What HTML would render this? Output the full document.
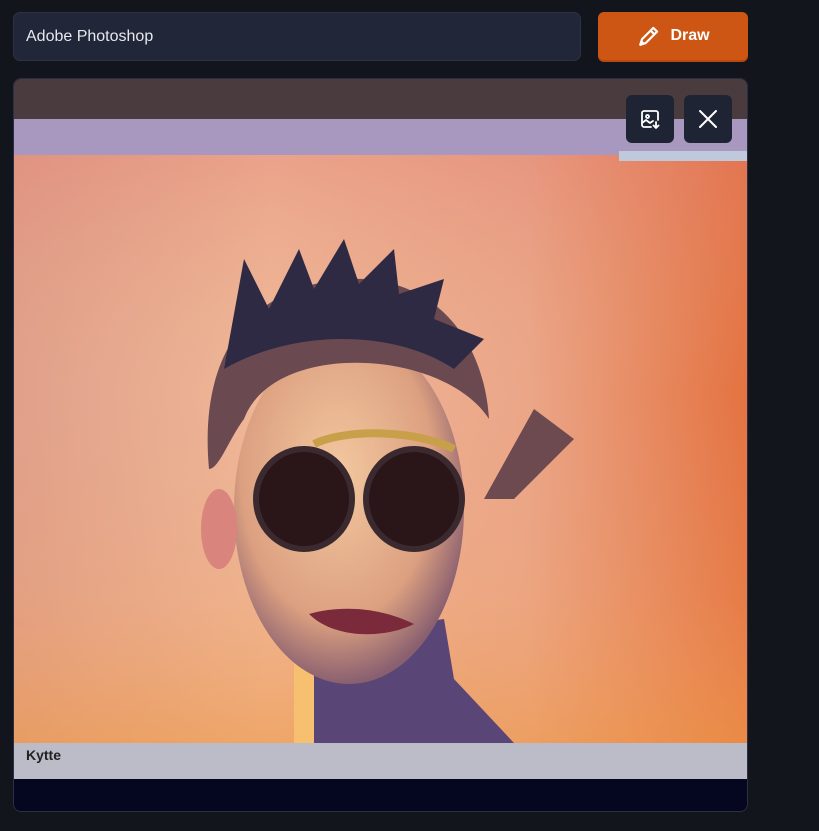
<!DOCTYPE html>
<html><head><meta charset="utf-8"><style>
body{margin:0;width:819px;height:831px;background:#13151d;font-family:"Liberation Sans",sans-serif;position:relative;overflow:hidden}
.inp{position:absolute;left:13px;top:12px;width:568px;height:49px;background:#222639;border:1px solid #2c3146;border-radius:7px;box-sizing:border-box;color:#e6e8ee;font-size:16px;line-height:48px;padding-left:12px}
.btn{position:absolute;left:598px;top:12px;width:150px;height:48px;background:#cd5614;border-radius:6px;color:#fff;font-weight:bold;font-size:16px;display:flex;align-items:center;justify-content:center;gap:8px;box-shadow:0 2px 0 #b84a10}
.card{position:absolute;left:13px;top:78px;width:735px;height:734px;border-radius:8px;overflow:hidden;border:1px solid #2a2f44;box-sizing:border-box}
.ib{position:absolute;top:95px;width:48px;height:48px;background:#1f2435;border-radius:6px;display:flex;align-items:center;justify-content:center}
</style></head><body>
<div class="inp">Adobe Photoshop</div>
<div class="btn"><svg width="26" height="26" viewBox="0 0 24 24" fill="none" stroke="#fff" stroke-width="2" stroke-linejoin="round"><path d="M4 20l1.5-5L16 4.5l3.5 3.5L9 18.5z"/><path d="M13.5 7l3.5 3.5"/><path d="M4 20l3-1-2-2z" fill="#fff"/></svg>Draw</div>
<div class="card">
<svg width="735" height="734" viewBox="0 0 735 734">
<defs>
<linearGradient id="bg" x1="0" y1="0" x2="1" y2="0"><stop offset="0" stop-color="#e0a08a"/><stop offset="0.35" stop-color="#f0b898"/><stop offset="0.7" stop-color="#eba688"/><stop offset="1" stop-color="#e47240"/></linearGradient>
<linearGradient id="bg2" x1="0" y1="0" x2="0" y2="1"><stop offset="0" stop-color="#e07a70" stop-opacity="0.35"/><stop offset="0.4" stop-color="#e0a080" stop-opacity="0"/><stop offset="0.75" stop-color="#f0a060" stop-opacity="0.2"/><stop offset="1" stop-color="#ee9a48" stop-opacity="0.6"/></linearGradient>
<radialGradient id="face" cx="0.45" cy="0.4" r="0.6"><stop offset="0" stop-color="#f3c8a0"/><stop offset="0.7" stop-color="#dca080"/><stop offset="1" stop-color="#8a6070"/></radialGradient>
</defs>
<rect width="735" height="734" fill="#050720"/>
<rect width="735" height="42" fill="#4a3c3e"/>
<rect y="40" width="735" height="38" fill="#a898bf"/>
<rect y="76" width="735" height="590" fill="url(#bg)"/>
<rect y="76" width="735" height="590" fill="url(#bg2)"/>
<rect y="664" width="735" height="36" fill="#bcbcc9"/>
<rect x="605" y="72" width="130" height="10" fill="#c0c8dc"/>
<path d="M290 560 L280 664 L500 664 L440 600 L430 540Z" fill="#5a4676"/>
<rect x="280" y="570" width="20" height="94" fill="#f6c070"/>
<ellipse cx="335" cy="430" rx="115" ry="175" fill="url(#face)"/>
<path d="M195 390 C185 280 230 210 330 200 C420 195 470 260 475 340 C430 270 260 260 230 340 C215 360 205 390 195 390Z" fill="#6a4a50"/>
<path d="M210 290 L230 180 L255 230 L285 170 L300 210 L330 160 L345 205 L380 170 L385 215 L430 200 L420 240 L470 260 L440 290 C380 250 280 250 210 290Z" fill="#2e2a44"/>
<path d="M470 420 L520 330 L560 360 L500 420Z" fill="#6c4a50"/>
<ellipse cx="205" cy="450" rx="18" ry="40" fill="#d9847c"/>
<ellipse cx="290" cy="420" rx="48" ry="50" fill="#2a1518" stroke="#3a2a30" stroke-width="6"/>
<ellipse cx="400" cy="420" rx="48" ry="50" fill="#2a1518" stroke="#3a2a30" stroke-width="6"/>
<path d="M300 365 C330 350 400 350 440 370" stroke="#c9a04a" stroke-width="8" fill="none"/>
<path d="M295 535 C330 525 370 530 400 545 C370 560 320 560 295 535Z" fill="#7a2a3a"/>
<text x="12" y="681" font-size="14" font-weight="bold" fill="#222">Kytte</text>
</svg>
</div>
<div class="ib" style="left:626px"><svg width="24" height="24" viewBox="0 0 24 24" fill="none" stroke="#fff" stroke-width="1.8" stroke-linecap="round" stroke-linejoin="round"><path d="M13 20H6a2 2 0 0 1-2-2V6a2 2 0 0 1 2-2h12a2 2 0 0 1 2 2v7"/><circle cx="9.5" cy="9.5" r="1.5"/><path d="M4 16l4-3 4 3 3-2"/><path d="M18 15v6M15.5 18.5L18 21l2.5-2.5"/></svg></div>
<div class="ib" style="left:684px"><svg width="22" height="22" viewBox="0 0 22 22" stroke="#fff" stroke-width="2" stroke-linecap="round"><path d="M3 3L19 19M19 3L3 19"/></svg></div>
</body></html>
